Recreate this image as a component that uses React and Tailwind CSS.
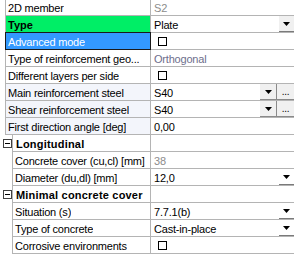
import React from "react";

const LINE = "border-[#b4b4b4]";

function Arrow() {
  return (
    <svg width="7" height="4" viewBox="0 0 7 4">
      <polygon points="0,0 7,0 3.5,4" fill="#000" />
    </svg>
  );
}

function ComboBtn({ gray }) {
  return (
    <div
      className={`w-[15px] h-full flex items-center justify-center border-b border-[#7a7a7a] ${
        gray ? "bg-[#f0f0f0]" : "bg-white"
      }`}
    >
      <Arrow />
    </div>
  );
}

function Check() {
  return <div className="w-[9px] h-[9px] border border-black bg-white ml-[4px]" />;
}

function Row({ indent = 5, label, labelCls = "", labelBg = "", value, valueCls = "text-black", right, selected, bold }) {
  return (
    <div className="flex h-[17px]">
      <div className={indent === 5 ? "w-[5px] shrink-0" : "w-[12px] shrink-0"} />
      <div className={`flex flex-1 border-b ${LINE}`}>
        <div
          className={`relative shrink-0 flex items-center border-l border-r ${LINE} ${
            indent === 5 ? "w-[146px]" : "w-[139px]"
          } ${labelBg}`}
        >
          {selected && (
            <div className="absolute left-[-1px] right-[-1px] top-[-1px] bottom-[-1px] border border-[#1a1a1a]" />
          )}
          <span
            className={`pl-[2px] pt-[1px] whitespace-nowrap overflow-hidden ${
              bold ? "font-bold tracking-normal" : ""
            } ${labelCls}`}
          >
            {label}
          </span>
        </div>
        <div className="flex-1 flex items-center min-w-0">
          <div className={`flex-1 flex items-center pl-[3px] pt-[1px] whitespace-nowrap ${valueCls}`}>{value}</div>
          {right && <div className="h-full flex">{right}</div>}
        </div>
      </div>
    </div>
  );
}

function Category({ label }) {
  return (
    <div className="flex h-[17px]">
      <div className="w-[12px] shrink-0 flex items-center">
        <div className="ml-[3px] w-[9px] h-[9px] border border-[#404040] flex items-center justify-center bg-white">
          <div className="w-[5px] h-[1px] bg-black" />
        </div>
      </div>
      <div className={`flex flex-1 border-b ${LINE}`}>
        <div className={`shrink-0 w-[139px] flex items-center border-l border-r ${LINE}`}>
          <span className="pl-[3px] pt-[1px] font-bold tracking-[0.2px] whitespace-nowrap">{label}</span>
        </div>
        <div className="flex-1" />
      </div>
    </div>
  );
}

function SteelBtns() {
  return (
    <>
      <div className="w-[17px] h-full flex items-center justify-center bg-[#f0f0f0] border-r border-b border-[#8a8a8a]">
        <Arrow />
      </div>
      <div className="w-[17px] h-full flex items-end justify-center bg-[#f0f0f0] border-b border-[#8a8a8a] leading-[12px] pb-[1px] text-[10px]">
        ...
      </div>
    </>
  );
}

export default function App() {
  return (
    <div
      className="w-[294px] h-[261px] bg-white overflow-hidden text-[11px] leading-[14px] tracking-[-0.2px] text-black"
      style={{ fontFamily: '"Liberation Sans", Arial, sans-serif' }}
    >
      <div className="-mt-[1px]">
        <Row label="2D member" value="S2" valueCls="text-[#8c8c8c]" />
        <Row label="Type" bold labelBg="bg-[#00ee66]" value="Plate" right={<ComboBtn gray />} />
        <Row label="Advanced mode" selected labelBg="bg-[#3399ff]" labelCls="text-white" value={<Check />} valueCls="" />
        <Row label="Type of reinforcement geo..." value="Orthogonal" valueCls="text-[#6e6e8c]" />
        <Row label="Different layers per side" value={<Check />} valueCls="" />
        <Row label="Main reinforcement steel" labelBg="bg-[#f3f5fb]" value="S40" right={<SteelBtns />} />
        <Row label="Shear reinforcement steel" labelBg="bg-[#f3f5fb]" value="S40" right={<SteelBtns />} />
        <Row label="First direction angle [deg]" labelBg="bg-[#f3f5fb]" value="0,00" />
        <Category label="Longitudinal" />
        <Row indent={12} label="Concrete cover (cu,cl) [mm]" value="38" valueCls="text-[#8c8c8c]" />
        <Row indent={12} label="Diameter (du,dl) [mm]" value="12,0" right={<ComboBtn />} />
        <Category label="Minimal concrete cover" />
        <Row indent={12} label="Situation (s)" value="7.7.1(b)" right={<ComboBtn />} />
        <Row indent={12} label="Type of concrete" value="Cast-in-place" right={<ComboBtn />} />
        <Row indent={12} label="Corrosive environments" value={<Check />} valueCls="" />
      </div>
    </div>
  );
}
